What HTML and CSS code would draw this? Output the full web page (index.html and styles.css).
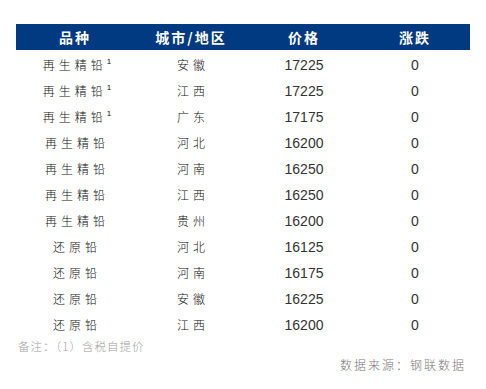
FILE: index.html
```html
<!DOCTYPE html>
<html lang="zh">
<head>
<meta charset="utf-8">
<link rel="stylesheet" href="styles.css">
</head>
<body>
<div class="wrap">
  <div class="table">
    <div class="row head">
      <div class="cell">品种</div>
      <div class="cell">城市/地区</div>
      <div class="cell">价格</div>
      <div class="cell">涨跌</div>
    </div>
    <div class="body">
      <div class="row"><div class="cell cn">再生精铅<sup>1</sup></div><div class="cell cn">安徽</div><div class="cell num">17225</div><div class="cell num">0</div></div>
      <div class="row"><div class="cell cn">再生精铅<sup>1</sup></div><div class="cell cn">江西</div><div class="cell num">17225</div><div class="cell num">0</div></div>
      <div class="row"><div class="cell cn">再生精铅<sup>1</sup></div><div class="cell cn">广东</div><div class="cell num">17175</div><div class="cell num">0</div></div>
      <div class="row"><div class="cell cn">再生精铅</div><div class="cell cn">河北</div><div class="cell num">16200</div><div class="cell num">0</div></div>
      <div class="row"><div class="cell cn">再生精铅</div><div class="cell cn">河南</div><div class="cell num">16250</div><div class="cell num">0</div></div>
      <div class="row"><div class="cell cn">再生精铅</div><div class="cell cn">江西</div><div class="cell num">16250</div><div class="cell num">0</div></div>
      <div class="row"><div class="cell cn">再生精铅</div><div class="cell cn">贵州</div><div class="cell num">16200</div><div class="cell num">0</div></div>
      <div class="row"><div class="cell cn">还原铅</div><div class="cell cn">河北</div><div class="cell num">16125</div><div class="cell num">0</div></div>
      <div class="row"><div class="cell cn">还原铅</div><div class="cell cn">河南</div><div class="cell num">16175</div><div class="cell num">0</div></div>
      <div class="row"><div class="cell cn">还原铅</div><div class="cell cn">安徽</div><div class="cell num">16225</div><div class="cell num">0</div></div>
      <div class="row"><div class="cell cn">还原铅</div><div class="cell cn">江西</div><div class="cell num">16200</div><div class="cell num">0</div></div>
    </div>
  </div>
  <div class="note">备注：（1）含税自提价</div>
  <div class="source">数据来源：钢联数据</div>
</div>
</body>
</html>
```
FILE: styles.css
```css
html, body {
  margin: 0;
  padding: 0;
  background: #ffffff;
}
.wrap {
  padding: 24px 0 0 16px;
  width: 454px;
  font-family: "Noto Sans CJK SC", sans-serif;
}
.row {
  display: grid;
  grid-template-columns: 118px 114px 112px 110px;
  height: 26px;
  align-items: center;
}
.cell {
  text-align: center;
  white-space: nowrap;
}
.head {
  background: #023a82;
  color: #ffffff;
  font-weight: bold;
  font-size: 14px;
  letter-spacing: 2px;
}
.head .cell {
  line-height: 26px;
}
.body {
  padding-top: 1.5px;
}
.cn {
  font-size: 12px;
  font-weight: 300;
  letter-spacing: 4px;
  color: #111111;
  padding-left: 4px;
}
.cn sup {
  font-family: "Liberation Sans", sans-serif;
  font-size: 8px;
  letter-spacing: 0;
  vertical-align: 6px;
  line-height: 0;
}
.num {
  font-family: "Liberation Sans", Arial, sans-serif;
  font-size: 14px;
  color: #333333;
}
.note {
  margin-top: 1px;
  padding-left: 2px;
  font-size: 11.5px;
  line-height: 14px;
  color: #a0a0a0;
  font-weight: 300;
  letter-spacing: 1px;
}
.source {
  margin-top: 5px;
  text-align: right;
  padding-right: 4px;
  font-size: 12px;
  line-height: 14px;
  color: #777777;
  font-weight: 300;
  letter-spacing: 2px;
}
```
